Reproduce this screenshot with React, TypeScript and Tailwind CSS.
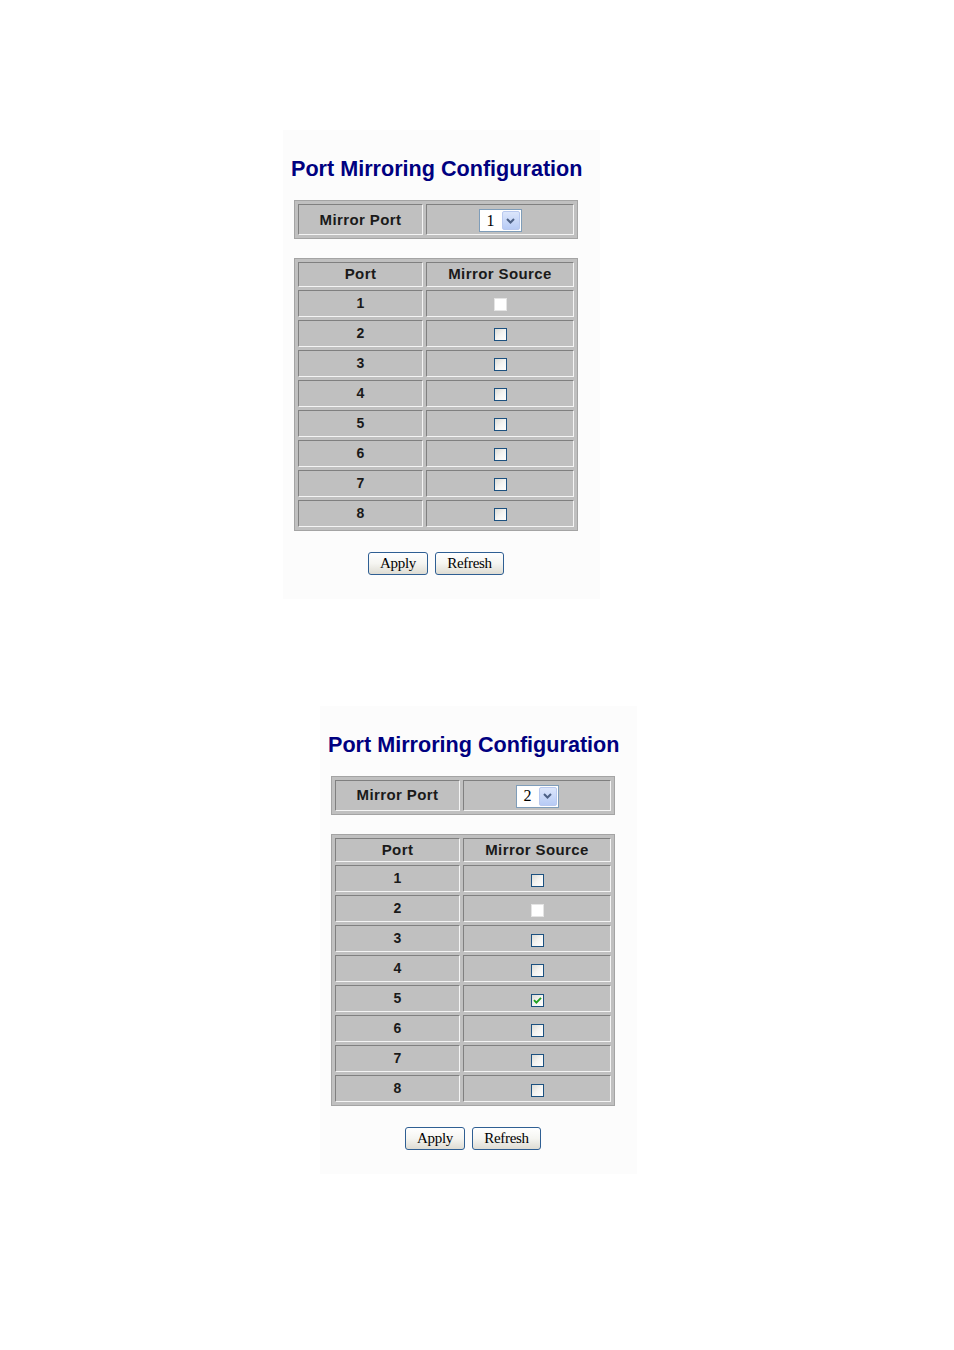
import React from 'react';

const PORTS = [1, 2, 3, 4, 5, 6, 7, 8];

function Cell({ children, className = '' }: { children?: React.ReactNode; className?: string }) {
  return (
    <td
      className={`border border-t-[#808080] border-l-[#808080] border-b-[#f4f4f4] border-r-[#f4f4f4] bg-[#c0c0c0] p-0 text-center align-middle ${className}`}
    >
      {children}
    </td>
  );
}

function Checkbox({ state }: { state: 'self' | 'off' | 'on' }) {
  if (state === 'self') {
    return <span className="inline-block h-[13px] w-[13px] border border-[#e4e4e4] bg-white align-middle" />;
  }
  return (
    <span className="inline-flex h-[13px] w-[13px] items-center justify-center border border-[#1c5180] bg-gradient-to-br from-[#dcdcd7] via-[#f4f4f2] to-white align-middle">
      {state === 'on' && (
        <svg width="9" height="9" viewBox="0 0 9 9">
          <path d="M1 4.2 L3.4 6.6 L8 1.8" stroke="#21a121" strokeWidth="1.9" fill="none" />
        </svg>
      )}
    </span>
  );
}

function Select({ value }: { value: number }) {
  return (
    <span className="inline-flex h-[23px] w-[43px] items-center border border-[#7f9db9] bg-white align-middle">
      <span className="flex-1 pl-[7px] text-left font-['Liberation_Serif',serif] text-[16px] leading-none text-black">
        {value}
      </span>
      <span className="mr-[1px] flex h-[19px] w-[18px] items-center justify-center rounded-[2px] border border-[#b9c9ef] bg-gradient-to-b from-[#dce6fb] to-[#b7cbf5]">
        <svg width="9" height="6" viewBox="0 0 9 6">
          <path d="M1 1 L4.5 4.5 L8 1" stroke="#4d6185" strokeWidth="2" fill="none" />
        </svg>
      </span>
    </span>
  );
}

function Button({ label, width }: { label: string; width: string }) {
  return (
    <button
      className={`h-[23px] ${width} rounded-[3px] border border-[#2f5f93] bg-gradient-to-b from-white via-[#f5f5f1] to-[#dedcd3] font-['Liberation_Serif',serif] text-[15px] leading-none tracking-[-0.3px] text-black`}
    >
      {label}
    </button>
  );
}

function Panel({ mirrorPort, checked }: { mirrorPort: number; checked: number[] }) {
  const headText = "font-['Liberation_Sans',Arial,sans-serif] text-[15px] font-bold tracking-[0.4px] text-[#1a1a1a]";
  return (
    <div className="w-[317px] bg-[#fcfcfc] pb-[24px] pl-[8px] pt-[26px]">
      <h1 className="font-['Liberation_Sans',Arial,sans-serif] text-[21.6px] font-bold leading-[26px] text-[#000080]">
        Port Mirroring Configuration
      </h1>

      {/* Mirror port selector */}
      <table className="ml-[3px] mt-[18px] w-[284px] border-separate border-spacing-[3px] border border-[#a4a4a4] bg-[#c0c0c0]">
        <tbody>
          <tr className="h-[31px]">
            <Cell className={`w-[125px] pt-[1px] ${headText}`}>Mirror Port</Cell>
            <Cell>
              <Select value={mirrorPort} />
            </Cell>
          </tr>
        </tbody>
      </table>

      {/* Mirror source list */}
      <table className="ml-[3px] mt-[19px] w-[284px] border-separate border-spacing-[3px] border border-[#a4a4a4] bg-[#c0c0c0]">
        <tbody>
          <tr className="h-[24px]">
            <Cell className={`w-[125px] ${headText}`}>Port</Cell>
            <Cell className={headText}>Mirror Source</Cell>
          </tr>
          {PORTS.map(p => (
            <tr key={p} className="h-[27px]">
              <Cell className="font-['Liberation_Sans',Arial,sans-serif] text-[14px] font-bold text-[#1a1a1a]">{p}</Cell>
              <Cell>
                <Checkbox state={p === mirrorPort ? 'self' : checked.includes(p) ? 'on' : 'off'} />
              </Cell>
            </tr>
          ))}
        </tbody>
      </table>

      <div className="ml-[3px] mt-[21px] flex w-[284px] justify-center gap-[7px]">
        <Button label="Apply" width="w-[60px]" />
        <Button label="Refresh" width="w-[69px]" />
      </div>
    </div>
  );
}

export default function App() {
  return (
    <div className="h-[1350px] w-[954px] bg-white">
      <div className="ml-[283px] pt-[130px]">
        <Panel mirrorPort={1} checked={[]} />
      </div>
      <div className="ml-[320px] mt-[107px]">
        <Panel mirrorPort={2} checked={[5]} />
      </div>
    </div>
  );
}
